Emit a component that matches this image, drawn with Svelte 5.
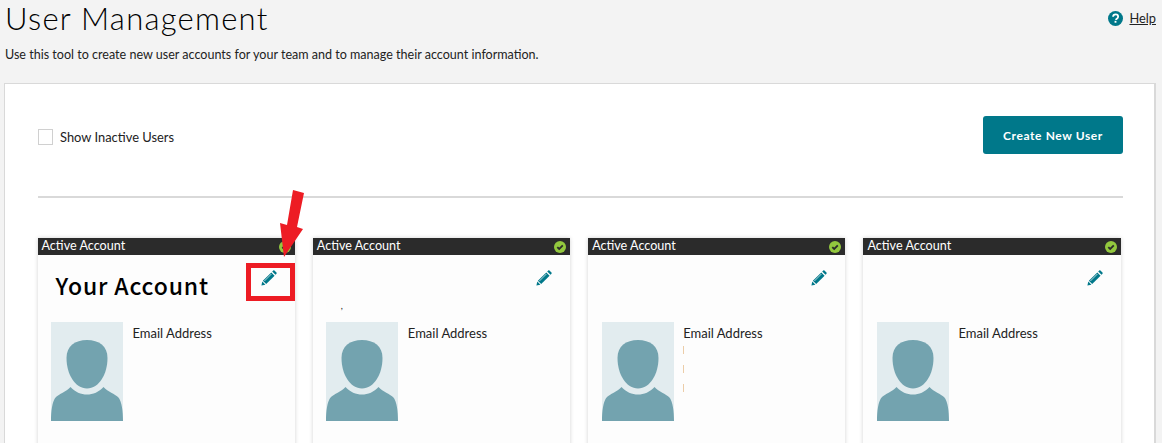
<script>
	let cards = [
		{ name: 'Your Account', specks: 0, crumb: false },
		{ name: '', specks: 0, crumb: true },
		{ name: '', specks: 3, crumb: false },
		{ name: '', specks: 0, crumb: false }
	];
</script>

<main>
	<header class="top">
		<h1>User Management</h1>
		<a class="help" href="#help">
			<svg width="15" height="15" viewBox="0 0 16 16">
				<circle cx="8" cy="8" r="8" fill="#00788a" />
				<path d="M5.4 6.2C5.5 4.6 6.6 3.7 8.1 3.7c1.600 0 2.700 1 2.700 2.300 0 1.100-.6 1.700-1.400 2.200-.6.4-.8.7-.8 1.300" fill="none" stroke="#fff" stroke-width="1.900" />
				<rect x="7" y="10.500" width="2" height="2" fill="#fff" />
			</svg>
			<span>Help</span>
		</a>
	</header>
	<p class="intro">Use this tool to create new user accounts for your team and to manage their account information.</p>

	<section class="panel">
		<div class="tools">
			<label class="inactive">
				<span class="box"></span>
				Show Inactive Users
			</label>
			<button>Create New User</button>
		</div>
		<hr />

		<div class="grid">
			{#each cards as card}
				<article class="card">
					<div class="status">
						<span>Active Account</span>
						<svg width="12" height="12" viewBox="0 0 12 12">
							<circle cx="6" cy="6" r="6" fill="#93c83e" />
							<path d="M3.300 6.100 5.200 8 8.800 4.400" fill="none" stroke="#2b2b2b" stroke-width="1.800" />
						</svg>
					</div>
					<div class="head">
						<h2>{card.name}</h2>
						<svg class="pencil" width="16" height="16" viewBox="0 0 16 16">
							<path d="M11.200 1.500 12.300.5c.4-.3.800-.3 1.100 0l2.100 2.100c.3.300.3.700 0 1.100l-1 1.100z" fill="#00788a" />
							<path d="M10.300 2.400 13.600 5.700 5.200 14.100 1.900 10.800z" fill="#00788a" />
							<path d="M1.300 11.600 4.400 14.700.4 15.600z" fill="#00788a" />
							<path d="M3.400 11 10.400 4" stroke="#fff" stroke-width=".7" />
						</svg>
						{#if card.crumb}
							<span class="crumb">,</span>
						{/if}
					</div>
					<div class="contact">
						<svg class="photo" width="72" height="99" viewBox="0 0 72 99">
							<rect width="72" height="99" fill="#e2ecef" />
							<path d="M36 18C48 18 56.500 24 56.500 36 56.500 52 48 66.500 36 66.500 24 66.500 15.500 52 15.500 36 15.500 24 24 18 36 18Z" fill="#73a3af" />
							<path d="M0 99C0 90 1 79 5 75 8 72 15 70 19.500 65 24 70 30 72.500 36 72.500 42 72.500 48 70 52.500 65 57 70 64 72 67 75 71 79 72 90 72 99Z" fill="#73a3af" />
						</svg>
						<div class="info">
							<div class="label">Email Address</div>
							{#each Array(card.specks) as _}
								<i class="speck"></i>
							{/each}
						</div>
					</div>
				</article>
			{/each}
		</div>
	</section>

	<!-- annotation drawn over the screenshot -->
	<div class="mark"></div>
	<svg class="arrow" width="30" height="72" viewBox="0 0 30 72">
		<path d="M13 0 24 3 17 37 23 39 4 67 0 33 7 35Z" fill="#ed1c24" />
	</svg>
</main>

<style>
	:global(body) {
		background: #f3f3f3;
		overflow: hidden;
	}
	main {
		position: relative;
		height: 443px;
		overflow: hidden;
		font-family: Lato, "Liberation Sans", sans-serif;
		color: #222;
	}
	.top {
		display: flex;
		justify-content: space-between;
		align-items: flex-start;
		padding: 0 6px 0 5px;
		height: 44px;
	}
	h1 {
		margin: 0;
		font-size: 31px;
		line-height: 36px;
		font-weight: 300;
		letter-spacing: 1.25px;
		color: #000;
	}
	.help {
		display: flex;
		align-items: center;
		gap: 6px;
		margin-top: 10px;
		font-size: 12.8px;
		color: #222;
	}
	.intro {
		margin: 0;
		padding-left: 5px;
		font-size: 12.55px;
		line-height: 22px;
		height: 39px;
	}
	.panel {
		margin-left: 4px;
		margin-right: 6px;
		background: #fff;
		border: 1px solid #d9d9d9;
		border-right-width: 2px;
		padding: 32px 31px 0 33px;
	}
	.tools {
		display: flex;
		justify-content: space-between;
		align-items: center;
		height: 38px;
	}
	.inactive {
		display: flex;
		align-items: center;
		gap: 7px;
		font-size: 12.9px;
		margin-top: 4px;
	}
	.box {
		width: 13px;
		height: 14px;
		background: #fff;
		border: 1px solid #d0d0d0;
	}
	button {
		width: 140px;
		height: 38px;
		border: 0;
		border-radius: 3px;
		background: #00788a;
		color: #fff;
		font-family: inherit;
		font-size: 12px;
		font-weight: 700;
		letter-spacing: .6px;
	}
	hr {
		margin: 42px 0 40px;
		border: 0;
		height: 2px;
		background: #d9d9d9;
	}
	.grid {
		display: grid;
		grid-template-columns: repeat(4, 257.33px);
		gap: 18px;
		margin-left: -.5px;
	}
	.card {
		height: 240px;
		background: #fdfdfd;
		box-shadow: 0 0 4px rgba(0, 0, 0, .18);
	}
	.status {
		display: flex;
		justify-content: space-between;
		align-items: center;
		box-sizing: border-box;
		height: 17px;
		padding: 0 4px;
		background: #2b2b2b;
		color: #fff;
		font-size: 12.6px;
	}
	.status span {
		margin-top: -2px;
	}
	.head {
		position: relative;
		display: flex;
		justify-content: space-between;
		align-items: flex-start;
		box-sizing: border-box;
		height: 67px;
		padding: 15px 18px 0 18px;
	}
	h2 {
		margin: 0;
		font-family: "Noto Sans CJK JP", "Liberation Sans", sans-serif;
		font-size: 23px;
		line-height: 30px;
		font-weight: 500;
		letter-spacing: .85px;
		color: #000;
	}
	.pencil {
		flex: none;
	}
	.crumb {
		position: absolute;
		left: 28px;
		top: 46px;
		font-size: 9px;
		line-height: 10px;
	}
	.contact {
		display: flex;
		gap: 9.5px;
		padding-left: 13.5px;
	}
	.label {
		font-size: 13px;
		line-height: 22px;
		margin-bottom: 2px;
	}
	.info {
		display: flex;
		flex-direction: column;
		align-items: flex-start;
	}
	.speck {
		width: 1px;
		height: 8px;
		margin-bottom: 11px;
		background: #eccda8;
	}
	.mark {
		position: absolute;
		left: 246px;
		top: 263px;
		width: 39px;
		height: 28px;
		border: 5px solid #ed1c24;
	}
	.arrow {
		position: absolute;
		left: 280px;
		top: 190px;
	}
</style>
